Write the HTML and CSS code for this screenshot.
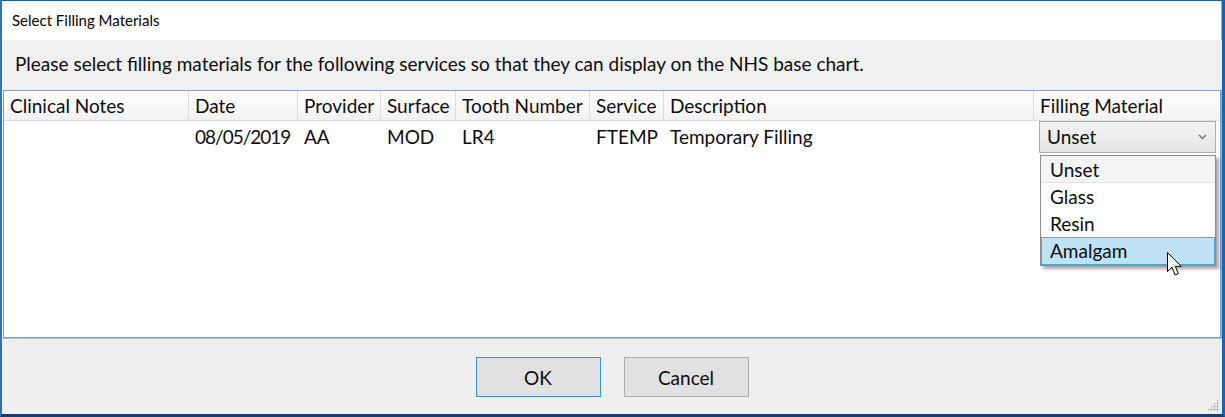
FILE: index.html
```html
<!DOCTYPE html>
<html>
<head>
<meta charset="utf-8">
<link rel="stylesheet" href="styles.css">
</head>
<body>
<div class="window">
  <div class="titlebar">Select Filling Materials</div>
  <div class="instructions">Please select filling materials for the following services so that they can display on the NHS base chart.</div>
  <div class="grid">
    <div class="row head">
      <div class="cell">Clinical Notes</div>
      <div class="cell">Date</div>
      <div class="cell">Provider</div>
      <div class="cell">Surface</div>
      <div class="cell">Tooth Number</div>
      <div class="cell">Service</div>
      <div class="cell">Description</div>
      <div class="cell last">Filling Material</div>
    </div>
    <div class="row data">
      <div class="cell"></div>
      <div class="cell num">08/05/2019</div>
      <div class="cell">AA</div>
      <div class="cell">MOD</div>
      <div class="cell">LR4</div>
      <div class="cell">FTEMP</div>
      <div class="cell">Temporary Filling</div>
      <div class="cell last editor">
        <div class="combo">
          <span>Unset</span>
          <svg class="chev" width="9" height="6" viewBox="0 0 9 6"><path d="M1 1 L4.5 4.5 L8 1" fill="none" stroke="#6d6d6d" stroke-width="1.3"/></svg>
        </div>
        <div class="list">
          <div class="opt first">Unset</div>
          <div class="opt">Glass</div>
          <div class="opt">Resin</div>
          <div class="opt hot">Amalgam</div>
        </div>
        <svg class="cursor" width="19" height="27" viewBox="0 0 19 27"><path d="M1.5 1.5 L1.5 20.5 L6 16.2 L9 24 L12.3 22.7 L9.3 15.3 L15.2 15.3 Z" fill="#fff" stroke="#000" stroke-width="1" stroke-linejoin="miter"/></svg>
      </div>
    </div>
  </div>
  <div class="footer">
    <button class="btn default">OK</button>
    <button class="btn">Cancel</button>
    <div class="grip"></div>
  </div>
</div>
</body>
</html>
```

FILE: styles.css
```css
* { box-sizing: border-box; }
html, body { margin: 0; padding: 0; background: #fff; }
body { font-family: Lato, "Noto Sans", sans-serif; color: #111; }
.window {
  width: 1225px;
  height: 417px;
  border: 1px solid #1b5a9c;
  border-left: 2px solid #2c74c0;
  border-right: 3px solid #1a63b0;
  border-bottom: 3px solid #143f6c;
  box-shadow: inset -1px 0 0 #7fb8ea;
  display: flex;
  flex-direction: column;
  background: #fff;
}
.titlebar {
  height: 39px;
  padding: 10px 0 0 10px;
  font-size: 15px;
  color: #000;
}
.instructions {
  height: 50px;
  background: #f0f0f0;
  padding: 12px 0 0 13px;
  font-size: 19px;
  color: #0d0d0d;
}
.grid {
  height: 248px;
  margin-left: 1px;
  margin-right: 1px;
  border: 1px solid #7d9bbd;
  border-top-color: #8ba7c7;
  background: #fff;
}
.row {
  display: grid;
  grid-template-columns: 185px 109px 83px 75px 134px 74px 370px 1fr;
}
.head {
  height: 30px;
  background: linear-gradient(#ffffff, #f2f2f2);
  border-bottom: 1px solid #dcdcdc;
}
.head .cell {
  border-right: 1px solid #dedede;
  padding: 3px 0 0 6px;
  font-size: 19px;
  color: #0d0d0d;
}
.head .cell.last { border-right: none; }
.data { height: 33px; }
.data .cell {
  padding: 4px 0 0 6px;
  font-size: 19px;
  color: #0d0d0d;
}
.data .cell.num { letter-spacing: -1px; }
.cell { white-space: nowrap; }
.data .editor {
  position: relative;
  padding: 0;
}
.combo {
  position: absolute;
  left: 5px;
  top: 0;
  width: 177px;
  height: 32px;
  border: 1px solid #adadad;
  background: linear-gradient(#f3f3f3, #e5e5e5);
  padding: 3px 0 0 7px;
  font-size: 19px;
  color: #0d0d0d;
}
.chev {
  position: absolute;
  right: 8px;
  top: 12px;
}
.list {
  position: absolute;
  left: 6px;
  top: 34px;
  width: 176px;
  border: 1px solid #8c8c8c;
  background: #fff;
  box-shadow: 3px 3px 3px rgba(0,0,0,0.35);
  z-index: 2;
}
.opt {
  height: 27px;
  padding: 1px 0 0 8px;
  font-size: 19px;
  color: #0d0d0d;
  border: 1px solid transparent;
}
.opt.first {
  background: #f4f4f4;
  border-bottom: 1px solid #e2e2e2;
}
.opt.hot {
  background: #bfe2f4;
  border: 1px solid #55a6d9;
  height: 28px;
}
.cursor {
  position: absolute;
  left: 132px;
  top: 130px;
  z-index: 3;
}
.footer {
  flex: 1;
  background: #efefef;
  border-top: 1px solid #b8c8da;
  display: flex;
  justify-content: center;
  align-items: flex-start;
  gap: 23px;
  padding-top: 18px;
  position: relative;
}
.btn {
  width: 125px;
  height: 40px;
  font-family: Lato, "Noto Sans", sans-serif;
  font-size: 19px;
  color: #0d0d0d;
  background: #e1e1e1;
  border: 1px solid #adadad;
  padding: 0;
}
.btn.default {
  border: 1px solid #3b8fdc;
  box-shadow: inset 0 0 0 1px #cfe5f7;
}
.grip {
  position: absolute;
  right: 3px;
  bottom: 3px;
  width: 12px;
  height: 12px;
  background-image: radial-gradient(circle, #b9c3cd 1px, transparent 1.2px);
  background-size: 3px 3px;
  clip-path: polygon(100% 0, 100% 100%, 0 100%);
}
```
